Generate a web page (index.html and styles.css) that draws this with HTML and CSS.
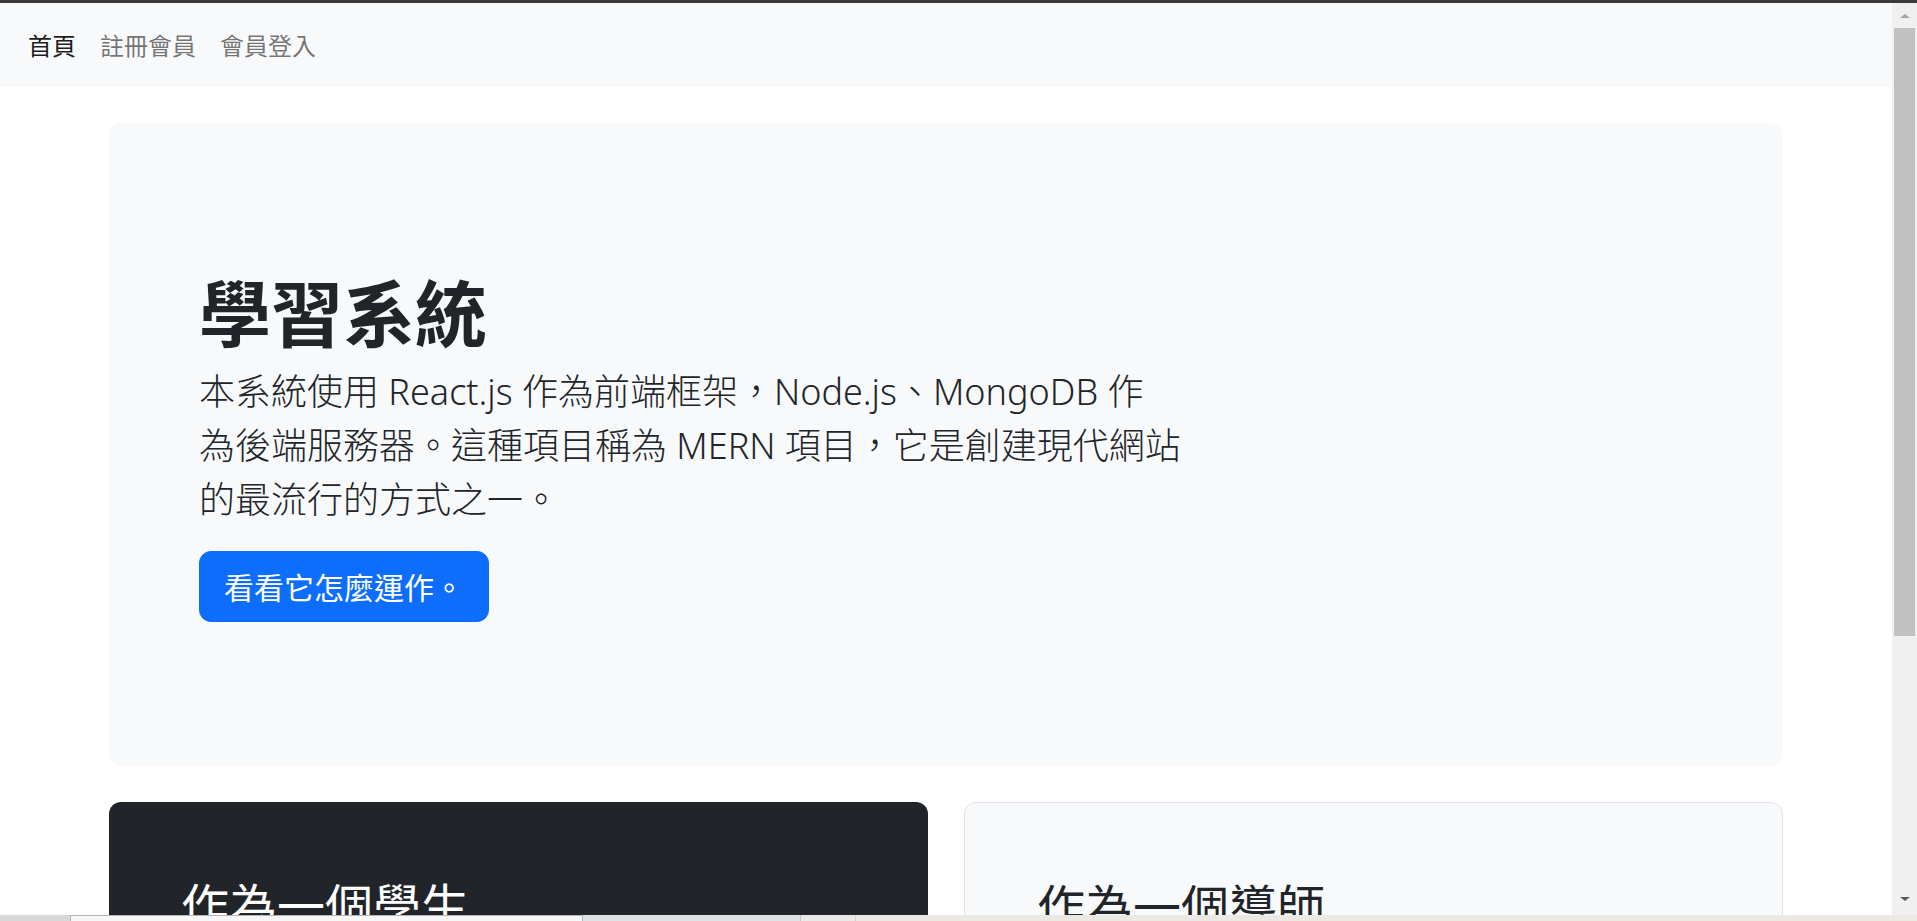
FILE: index.html
```html
<!DOCTYPE html>
<html lang="zh-Hant">
<head>
<meta charset="utf-8">
<title>學習系統</title>
<link rel="stylesheet" href="styles.css">
</head>
<body>
<div class="screen">
  <div class="topbar"></div>
  <div class="middle">
    <div class="page">
      <nav class="navbar">
        <a class="nav-link active" href="#">首頁</a>
        <a class="nav-link" href="#">註冊會員</a>
        <a class="nav-link" href="#">會員登入</a>
      </nav>
      <main class="container">
        <section class="hero">
          <h1 class="hero-title">學習系統</h1>
          <p class="lead">本系統使用 React.js 作為前端框架，Node.js、MongoDB 作<br>為後端服務器。這種項目稱為 MERN 項目，它是創建現代網站<br>的最流行的方式之一。</p>
          <button class="btn" type="button">看看它怎麼運作。</button>
        </section>
        <div class="cards">
          <div class="card card-dark"><h2 class="card-title">作為一個學生</h2></div>
          <div class="card card-light"><h2 class="card-title">作為一個導師</h2></div>
        </div>
      </main>
    </div>
    <div class="vscroll">
      <div class="arrow-box"><span class="arrow-up"></span></div>
      <div class="thumb"></div>
      <div class="track-fill"></div>
      <div class="arrow-box arrow-box-down"><span class="arrow-down"></span></div>
    </div>
  </div>
  <div class="bottomstrip">
    <span class="seg seg-a"></span>
    <span class="seg seg-b"></span>
    <span class="seg seg-c"></span>
    <span class="seg seg-d"></span>
    <span class="seg seg-e"></span>
  </div>
</div>
</body>
</html>
```

FILE: styles.css
```css
* { box-sizing: border-box; }

html, body {
  margin: 0;
  padding: 0;
  height: 100%;
  overflow: hidden;
  background: #ffffff;
}

body {
  font-family: "Segoe UI", "Noto Sans", "Noto Sans CJK TC", sans-serif;
  color: #212529;
}

.screen {
  display: flex;
  flex-direction: column;
  height: 921px;
  width: 1917px;
}

.topbar {
  height: 3px;
  background: #3a3a3a;
  flex: none;
}

.middle {
  flex: 1;
  display: flex;
  min-height: 0;
}

.page {
  flex: 1;
  overflow: hidden;
  background: #ffffff;
}

/* navbar */
.navbar {
  height: 84px;
  background: #f8f9fa;
  display: flex;
  align-items: center;
  padding: 0 16px;
}

.nav-link {
  font-family: "Noto Sans CJK TC", sans-serif;
  font-size: 24px;
  line-height: 36px;
  font-weight: 400;
  padding: 12px 12px;
  color: rgba(0, 0, 0, 0.55);
  text-decoration: none;
}

.nav-link.active {
  color: rgba(0, 0, 0, 0.9);
}

/* content */
.container {
  width: 1674px;
  margin: 36px auto 0;
}

.hero {
  background: #f8f9fa;
  border-radius: 12px;
  padding: 144px 90px;
}

.hero-title {
  font-family: "Noto Sans CJK TC", sans-serif;
  font-size: 72px;
  line-height: 86px;
  font-weight: 700;
  margin: 0 0 12px;
  color: #212529;
}

.lead {
  font-size: 36px;
  line-height: 54px;
  font-weight: 300;
  width: 1020px;
  margin: 0 0 24px;
  color: #212529;
}

.btn {
  font-family: "Noto Sans CJK TC", sans-serif;
  font-size: 30px;
  line-height: 45px;
  font-weight: 400;
  padding: 12px 24px;
  border: 1.5px solid #0d6efd;
  border-radius: 12px;
  background: #0d6efd;
  color: #ffffff;
  display: block;
}

.cards {
  display: grid;
  grid-template-columns: 1fr 1fr;
  gap: 36px;
  margin-top: 36px;
}

.card {
  min-height: 520px;
  padding: 72px;
  border-radius: 12px;
}

.card-dark {
  background: #212529;
  color: #ffffff;
}

.card-light {
  background: #f8f9fa;
  border: 1.5px solid #dee2e6;
  color: #212529;
}

.card-title {
  font-family: "Noto Sans CJK TC", sans-serif;
  font-size: 48px;
  line-height: 58px;
  font-weight: 400;
  margin: 0 0 12px;
}

/* fake window scrollbar */
.vscroll {
  width: 25px;
  flex: none;
  background: #f0f0f0;
  display: flex;
  flex-direction: column;
}

.arrow-box {
  height: 25px;
  display: flex;
  justify-content: center;
  align-items: center;
  flex: none;
}

.arrow-box-down {
  height: 20px;
  align-items: flex-start;
}

.arrow-up {
  width: 0;
  height: 0;
  border-left: 5px solid transparent;
  border-right: 5px solid transparent;
  border-bottom: 4px solid #a3a3a3;
}

.arrow-down {
  width: 0;
  height: 0;
  border-left: 5px solid transparent;
  border-right: 5px solid transparent;
  border-top: 4px solid #5a5a5a;
  margin-top: 2px;
}

.thumb {
  height: 608px;
  margin-left: 2px;
  width: 21px;
  background: #c1c1c1;
  flex: none;
}

.track-fill {
  flex: 1;
}

/* bottom strip */
.bottomstrip {
  height: 6px;
  flex: none;
  display: flex;
  background: #eceae6;
}

.seg { display: block; height: 100%; }
.seg-a { width: 70px; background: #d8d8d8; }
.seg-b { width: 513px; background: #f7f7f7; border: 1px solid #b5b5b5; border-bottom: none; }
.seg-c { width: 217px; background: #dfe2e5; }
.seg-d { width: 55px; background: #e9e9e9; border-left: 1px solid #c8c8c8; }
.seg-e { flex: 1; background: #ece9e4; border-left: 1px solid #cfcfcf; }
```
